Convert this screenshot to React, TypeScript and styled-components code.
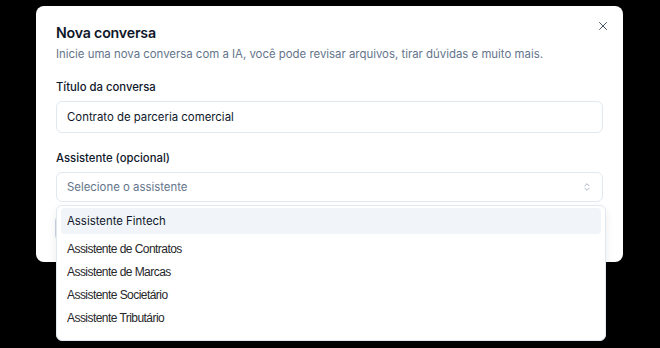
import * as React from 'react';
import styled, { createGlobalStyle } from 'styled-components';

const GlobalStyle = createGlobalStyle`
    html, body {
        margin: 0;
        padding: 0;
        background: #000;
        width: 660px;
        height: 348px;
        overflow: hidden;
    }
    * {
        box-sizing: border-box;
    }
`;

const Screen = styled.div`
    width: 660px;
    height: 348px;
    padding: 6px 0 0 36px;
    font-family: Inter, 'Noto Sans', sans-serif;
    color: #0f172a;
`;

const Dialog = styled.div`
    position: relative;
    width: 587px;
    height: 256px;
    background: #fff;
    border-radius: 8px;
    padding: 15px 20px 0;
    display: flex;
    flex-direction: column;
`;

const Header = styled.div`
    display: flex;
    flex-direction: column;
`;

const Title = styled.h2`
    margin: 0;
    font-size: 14.2px;
    line-height: 24px;
    font-weight: 600;
    letter-spacing: -0.2px;
`;

const Description = styled.p`
    margin: 1px 0 0;
    font-size: 11.4px;
    line-height: 16px;
    color: #64748b;
`;

const CloseButton = styled.button`
    position: absolute;
    top: 10px;
    right: 10px;
    width: 20px;
    height: 20px;
    padding: 0;
    border: 0;
    background: none;
    display: flex;
    align-items: center;
    justify-content: center;
    color: #475569;
`;

const Field = styled.div<{ $top: number }>`
    display: flex;
    flex-direction: column;
    gap: 5px;
    margin-top: ${(p) => p.$top}px;
`;

const Label = styled.label`
    font-size: 11.3px;
    line-height: 18px;
    font-weight: 500;
`;

const Input = styled.div`
    height: 32px;
    border: 1px solid #e2e8f0;
    border-radius: 6px;
    padding: 0 10px;
    display: flex;
    align-items: center;
    font-size: 11.4px;
    color: #0f172a;
`;

const Select = styled(Input)`
    height: 30px;
    justify-content: space-between;
    color: #64748b;
`;

const Footer = styled.div`
    display: flex;
    gap: 8px;
    margin: 13px 0 0 -1px;
`;

const GhostButton = styled.div`
    width: 90px;
    height: 26px;
    border: 1px solid #cbd5e1;
    border-radius: 6px;
`;

const Menu = styled.div`
    position: absolute;
    left: 20px;
    top: 199px;
    width: 550px;
    height: 136px;
    background: #fff;
    border: 1px solid #e2e8f0;
    border-radius: 6px;
    box-shadow: 0 4px 10px rgba(15, 23, 42, 0.08);
    padding: 2px 4px;
    display: flex;
    flex-direction: column;
`;

const Option = styled.div<{ $active?: boolean }>`
    height: ${(p) => (p.$active ? 26 : 23)}px;
    margin-bottom: ${(p) => (p.$active ? 3 : 0)}px;
    border-radius: 4px;
    padding: 0 6px;
    display: flex;
    align-items: center;
    background: ${(p) => (p.$active ? '#f1f5f9' : 'transparent')};
    font-family: ${(p) => (p.$active ? "Inter, 'Noto Sans', sans-serif" : "'Liberation Sans', Arial, sans-serif")};
    font-size: ${(p) => (p.$active ? 11.4 : 12)}px;
    letter-spacing: ${(p) => (p.$active ? 0 : -0.55)}px;
    color: ${(p) => (p.$active ? '#0f172a' : '#27272a')};
`;

const options = [
    'Assistente de Contratos',
    'Assistente de Marcas',
    'Assistente Societário',
    'Assistente Tributário',
];

export default function App() {
    return (
        <>
            <GlobalStyle />
            <Screen>
                <Dialog>
                    <Header>
                        <Title>Nova conversa</Title>
                        <Description>
                            Inicie uma nova conversa com a IA, você pode revisar arquivos, tirar dúvidas e muito mais.
                        </Description>
                    </Header>
                    <CloseButton aria-label="Fechar">
                        <svg width="14" height="14" viewBox="0 0 24 24" fill="none" stroke="currentColor" strokeWidth="1.7" strokeLinecap="round">
                            <path d="M18 6 6 18M6 6l12 12" />
                        </svg>
                    </CloseButton>
                    <Field $top={16}>
                        <Label>Título da conversa</Label>
                        <Input>Contrato de parceria comercial</Input>
                    </Field>
                    <Field $top={16}>
                        <Label>Assistente (opcional)</Label>
                        <Select>
                            Selecione o assistente
                            <svg width="10" height="10" viewBox="0 0 24 24" fill="none" stroke="#94a3b8" strokeWidth="2" strokeLinecap="round" strokeLinejoin="round">
                                <path d="m7 15 5 5 5-5M7 9l5-5 5 5" />
                            </svg>
                        </Select>
                    </Field>
                    <Footer>
                        <GhostButton />
                    </Footer>
                    <Menu>
                        <Option $active>Assistente Fintech</Option>
                        {options.map((o) => (
                            <Option key={o}>{o}</Option>
                        ))}
                    </Menu>
                </Dialog>
            </Screen>
        </>
    );
}
